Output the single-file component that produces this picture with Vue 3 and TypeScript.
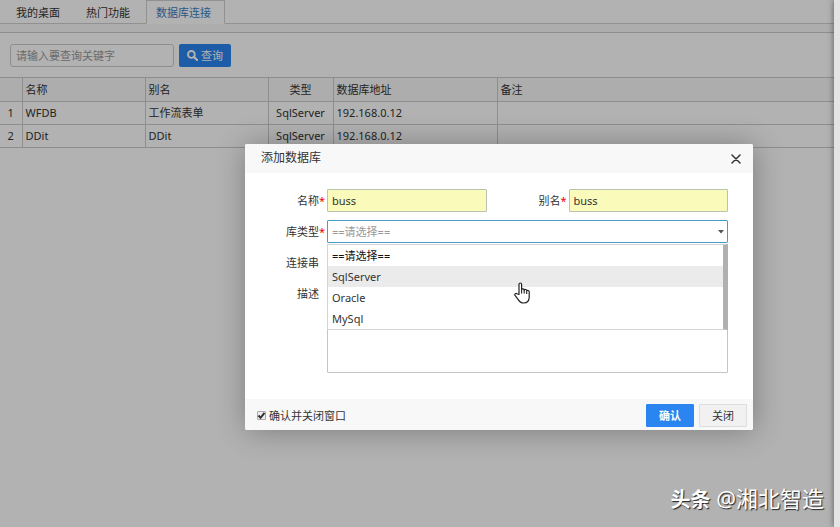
<script setup lang="ts">
import { ref } from 'vue'

interface Row {
  name: string
  alias: string
  type: string
  address: string
  remark: string
}

const tabs = ['我的桌面', '热门功能', '数据库连接']
const activeTab = ref(2)
const keyword = ref('')
const rows: Row[] = [
  { name: 'WFDB', alias: '工作流表单', type: 'SqlServer', address: '192.168.0.12', remark: '' },
  { name: 'DDit', alias: 'DDit', type: 'SqlServer', address: '192.168.0.12', remark: '' },
]

const placeholder = '==请选择=='
const types = [placeholder, 'SqlServer', 'Oracle', 'MySql']
const hovered = ref(1)
const form = ref({ name: 'buss', alias: 'buss', type: placeholder, connection: '', remark: '' })
const closeAfter = ref(true)
</script>

<template>
  <div class="shell">
    <main class="page">
      <nav class="tabs">
        <button
          v-for="(tab, i) in tabs"
          :key="tab"
          type="button"
          class="tab"
          :class="{ active: i === activeTab }"
          @click="activeTab = i"
        >{{ tab }}</button>
      </nav>
      <div class="strip"></div>
      <form class="search" @submit.prevent>
        <input v-model="keyword" class="keyword" type="text" placeholder="请输入要查询关键字" aria-label="请输入要查询关键字" />
        <button class="query" type="submit">
          <svg width="11" height="11" viewBox="0 0 12 12" aria-hidden="true">
            <circle cx="4.8" cy="4.8" r="3.7" fill="none" stroke="currentColor" stroke-width="2" />
            <path d="M7.8 7.8 11 11" stroke="currentColor" stroke-width="2.4" stroke-linecap="round" />
          </svg>
          查询
        </button>
      </form>
      <table class="grid">
        <colgroup>
          <col class="c-index" /><col class="c-name" /><col class="c-name" /><col class="c-type" /><col class="c-address" /><col />
        </colgroup>
        <thead>
          <tr>
            <th></th><th>名称</th><th>别名</th><th class="center">类型</th><th>数据库地址</th><th>备注</th>
          </tr>
        </thead>
        <tbody>
          <tr v-for="(row, i) in rows" :key="row.name">
            <td class="center">{{ i + 1 }}</td>
            <td>{{ row.name }}</td>
            <td>{{ row.alias }}</td>
            <td class="center">{{ row.type }}</td>
            <td>{{ row.address }}</td>
            <td>{{ row.remark }}</td>
          </tr>
        </tbody>
      </table>
      <div class="mask"></div>
    </main>
    <aside class="edge"></aside>

    <section class="dialog" role="dialog" aria-labelledby="dialog-title">
      <header class="dialog-head">
        <h2 id="dialog-title">添加数据库</h2>
        <button class="close" type="button" aria-label="关闭">
          <svg width="10" height="10" viewBox="0 0 10 10" aria-hidden="true">
            <path d="M1 1 9 9M9 1 1 9" stroke="currentColor" stroke-width="1.5" stroke-linecap="round" />
          </svg>
        </button>
      </header>
      <div class="fields">
        <label for="f-name">名称<span class="mark">*</span></label>
        <input id="f-name" v-model="form.name" class="filled" type="text" />
        <label for="f-alias">别名<span class="mark">*</span></label>
        <input id="f-alias" v-model="form.alias" class="filled" type="text" />

        <label for="f-type">库类型<span class="mark">*</span></label>
        <div class="wide combo">
          <select id="f-type" v-model="form.type">
            <option v-for="t in types" :key="t">{{ t }}</option>
          </select>
          <svg class="caret" width="6" height="4" viewBox="0 0 6 4" aria-hidden="true"><path d="M0 0h6L3 3.5z" fill="#555" /></svg>
          <ul class="menu">
            <li
              v-for="(t, i) in types"
              :key="t"
              :class="{ hovered: i === hovered, first: i === 0 }"
              @mouseenter="hovered = i"
            >{{ t }}</li>
          </ul>
        </div>

        <label for="f-conn">连接串<span class="mark"></span></label>
        <input id="f-conn" v-model="form.connection" class="wide" type="text" />

        <label for="f-remark">描述<span class="mark"></span></label>
        <textarea id="f-remark" v-model="form.remark" class="wide"></textarea>
      </div>
      <footer class="dialog-foot">
        <label class="check">
          <input v-model="closeAfter" type="checkbox" />
          <svg class="tick" width="9" height="9" viewBox="0 0 9 9" aria-hidden="true"><path d="M1.5 4.5 3.6 6.8 7.5 1.8" fill="none" stroke="#333" stroke-width="2" /></svg>
          确认并关闭窗口
        </label>
        <button class="ok" type="button">确认</button>
        <button class="cancel" type="button">关闭</button>
      </footer>
    </section>

    <svg class="pointer" width="16" height="22" viewBox="0 0 16 22" aria-hidden="true">
      <path
        d="M5 12.500V2.400C5 .5 7.600.5 7.600 2.400V7.500C8 6.500 10.100 6.600 10.200 8C10.800 7.100 12.500 7.300 12.700 8.600C13.500 8 15.200 8.400 15.200 10V15C15.200 18.700 13 21 9.700 21C6.700 21 5.400 19.700 4.200 17.600L1 13.400C.3 11.900 1.800 10.800 3 11.700Z"
        fill="#fff" stroke="#222" stroke-width="1.200" stroke-linejoin="round"
      />
      <path d="M7.600 7.500v4M10.200 8V11.500M12.700 8.600V12" stroke="#222" stroke-width="1.100" />
    </svg>
    <div class="credit"><b>头条</b> @湘北智造</div>
  </div>
</template>

<style>
body {
  margin: 0;
}
</style>

<style scoped>
.shell {
  position: relative;
  display: flex;
  min-height: 100vh;
  overflow: hidden;
  font-family: "Noto Sans", "Noto Sans CJK SC", sans-serif;
  font-size: 11px;
  line-height: 16px;
  color: #333;
  background: #fff;
}
.shell * {
  box-sizing: border-box;
}
button,
input,
select,
textarea {
  margin: 0;
  font: inherit;
  color: inherit;
}
.page {
  position: relative;
  flex: 1;
  min-width: 0;
}
.edge {
  position: relative;
  width: 6px;
  background: #e4e4e4;
  box-shadow: 0 0 6px rgba(0, 0, 0, 0.5);
}
.mask {
  position: absolute;
  inset: 0;
  background: rgba(0, 0, 0, 0.3);
}
.tabs {
  display: flex;
  height: 24px;
  padding-left: 3px;
  border-bottom: 1px solid #d0d0d0;
}
.tab {
  height: 24px;
  padding: 2px 13px 0;
  border: 0;
  background: none;
}
.tab:nth-child(2) {
  margin-right: 3px;
}
.tab.active {
  padding: 2px 13px 0 9px;
  border: 1px solid #d0d0d0;
  border-bottom-color: #fff;
  background: #fff;
  color: #3a82c4;
}
.strip {
  height: 9px;
  border-bottom: 1px solid #ccc;
  background: #f8f8f8;
}
.search {
  display: flex;
  gap: 5px;
  padding: 11px 10px 10px;
}
.keyword {
  width: 164px;
  height: 23px;
  padding: 0 5px;
  border: 1px solid #ccc;
  border-radius: 3px;
  background: #fff;
}
.keyword::placeholder {
  color: #999;
  opacity: 1;
}
.query {
  display: flex;
  align-items: center;
  justify-content: center;
  gap: 3px;
  width: 52px;
  height: 23px;
  padding: 0;
  border: 0;
  border-radius: 2px;
  background: #2a85f0;
  color: #fff;
}
.grid {
  width: 100%;
  table-layout: fixed;
  border-collapse: collapse;
}
.c-index {
  width: 22px;
}
.c-name {
  width: 123px;
}
.c-type {
  width: 65px;
}
.c-address {
  width: 164px;
}
.grid th,
.grid td {
  height: 23px;
  padding: 0 3px;
  border: 1px solid #ccc;
  border-left: 0;
  font-weight: 400;
  text-align: left;
}
.grid th {
  height: 24px;
  background: #f8f8f8;
}
.grid tr > :last-child {
  border-right: 0;
}
.grid .center {
  padding: 0;
  text-align: center;
}
.dialog {
  position: absolute;
  top: 144px;
  left: 245px;
  width: 508px;
  border-radius: 2px;
  background: #fff;
  box-shadow: 1px 1px 30px rgba(0, 0, 0, 0.3);
}
.dialog-head {
  display: flex;
  align-items: center;
  justify-content: space-between;
  height: 29px;
  padding: 0 12px 0 16px;
  border-radius: 2px 2px 0 0;
  background: #f8f8f8;
}
.dialog-head h2 {
  margin: 0;
  padding-bottom: 2px;
  font-size: 12px;
  font-weight: 400;
}
.close {
  display: flex;
  padding: 0;
  border: 0;
  background: none;
}
.fields {
  display: grid;
  grid-template-columns: 82px 1fr 82px 1fr;
  row-gap: 8px;
  padding: 16px 25px 26px 0;
}
.fields label {
  display: flex;
  align-items: center;
  justify-content: flex-end;
  height: 24px;
  margin-bottom: -1px;
}
.mark {
  width: 8px;
  color: #e00;
}
.wide {
  grid-column: 2 / -1;
}
.fields input,
.fields select,
.fields textarea {
  display: block;
  width: 100%;
  height: 23px;
  padding: 0 4px;
  border: 1px solid #c4c4c4;
  border-radius: 1px;
  outline: 0;
  background: #fff;
}
.fields .wide {
  width: auto;
}
.fields .filled {
  border-color: #b8c4b0;
  background: #fafabb;
}
.fields textarea {
  height: 91px;
  resize: none;
}
.combo {
  position: relative;
}
.fields select {
  appearance: none;
  border-color: #4a9cc8;
  color: #999;
}
.caret {
  position: absolute;
  top: 10px;
  right: 4px;
  pointer-events: none;
}
.menu {
  position: absolute;
  top: 24px;
  left: 0;
  right: 0;
  margin: 0;
  padding: 0;
  border: 1px solid #d4d4d4;
  border-right: 5px solid #b0b0b0;
  background: #fff;
  list-style: none;
}
.menu li {
  height: 21px;
  padding: 0 4px;
  line-height: 21px;
}
.menu .first {
  color: #111;
}
.menu .hovered {
  background: #ebebeb;
}
.dialog-foot {
  display: flex;
  align-items: center;
  gap: 5px;
  height: 31px;
  padding: 2px 6px 0 12px;
  border-radius: 0 0 2px 2px;
  background: #f8f8f8;
}
.check {
  position: relative;
  display: flex;
  align-items: center;
  gap: 3px;
  margin-right: auto;
}
.check input {
  appearance: none;
  width: 9px;
  height: 9px;
  border: 1px solid #aaa;
  border-radius: 1px;
  background: #eee;
}
.tick {
  position: absolute;
  left: 0;
  visibility: hidden;
  pointer-events: none;
}
.check input:checked + .tick {
  visibility: visible;
}
.ok,
.cancel {
  width: 48px;
  height: 23px;
  padding: 0;
  border: 1px solid #ddd;
  border-radius: 1px;
  background: #f1f1f1;
}
.ok {
  border-color: #2a85f0;
  background: #2a85f0;
  color: #fff;
  font-weight: 700;
}
.pointer {
  position: absolute;
  top: 282px;
  left: 514px;
}
.credit {
  position: absolute;
  right: 16px;
  bottom: 14px;
  font-size: 22px;
  line-height: 26px;
  color: #fff;
  text-shadow: 1px 1px 1px #222;
}
.credit b {
  font-size: 20px;
}
</style>
